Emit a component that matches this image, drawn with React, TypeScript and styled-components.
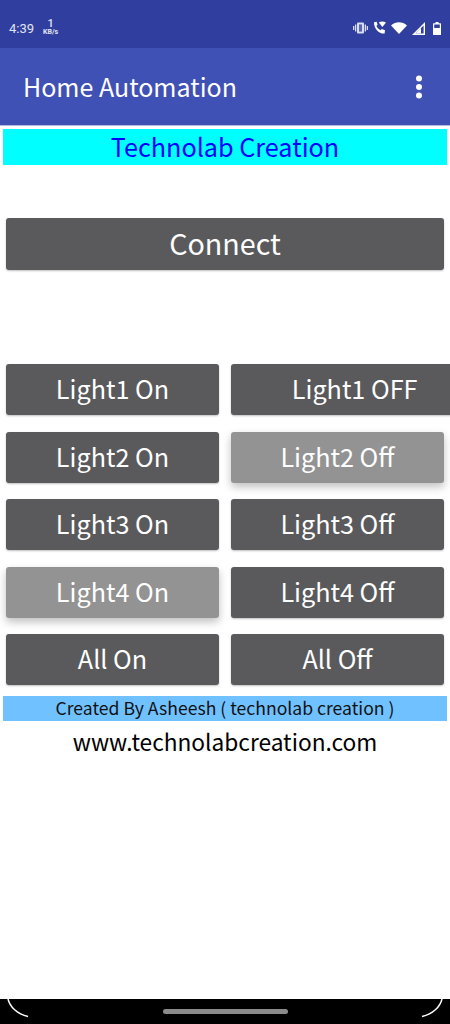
import React from 'react';
import styled, { createGlobalStyle } from 'styled-components';

const GlobalStyle = createGlobalStyle`
  html, body {
    margin: 0;
    padding: 0;
    background: #ffffff;
  }
  body {
    font-family: 'Noto Sans CJK SC', 'Noto Sans', sans-serif;
  }
`;

const Screen = styled.div`
  width: 450px;
  height: 1024px;
  display: flex;
  flex-direction: column;
  overflow: hidden;
  background: #ffffff;
`;

const StatusBar = styled.div`
  height: 48px;
  flex: none;
  box-sizing: border-box;
  padding: 8px 8px 0 9px;
  display: flex;
  align-items: center;
  background: #303f9f;
  color: #e2e4f3;
`;

const Clock = styled.span`
  font-family: 'Roboto', sans-serif;
  font-size: 13px;
  width: 34px;
`;

const NetSpeed = styled.span`
  display: flex;
  flex-direction: column;
  align-items: center;
  font-family: 'Roboto', sans-serif;
  font-weight: 700;
  font-size: 7px;
  line-height: 7px;
  margin-top: -1px;

  b {
    font-size: 11px;
    line-height: 10px;
    font-weight: 500;
  }
`;

const StatusIcons = styled.div`
  margin-left: auto;
  display: flex;
  align-items: center;
  gap: 5px;
`;

const AppBar = styled.div`
  height: 78px;
  flex: none;
  box-sizing: border-box;
  padding: 0 27px 2px 23px;
  display: flex;
  align-items: center;
  justify-content: space-between;
  background: #3f51b5;
  color: #ffffff;
  font-size: 25px;
  border-bottom: 1px solid #b4bae0;
`;

const MenuDots = styled.svg`
  margin-top: 2px;
`;

const Content = styled.div`
  flex: 1;
  display: flex;
  flex-direction: column;
  padding: 3px 3px 0;
`;

const Banner = styled.div`
  height: 36px;
  box-sizing: border-box;
  padding-bottom: 2px;
  line-height: 34px;
  text-align: center;
  background: #00ffff;
  color: #0000ff;
  font-size: 25.2px;
`;

const Button = styled.div<{ $pressed?: boolean; $large?: boolean; $wide?: boolean }>`
  height: ${p => (p.$large ? 52 : 51)}px;
  flex: none;
  box-sizing: border-box;
  padding-bottom: 3px;
  width: ${p => (p.$wide ? '248px' : 'auto')};
  display: flex;
  align-items: center;
  justify-content: center;
  white-space: nowrap;
  border-radius: 3px;
  color: #ffffff;
  font-size: ${p => (p.$large ? 28.7 : 25.2)}px;
  background: ${p => (p.$pressed ? '#939393' : '#5a5a5c')};
  box-shadow: ${p =>
    p.$pressed ? '0 4px 8px rgba(0, 0, 0, 0.25)' : '0 1px 2px rgba(0, 0, 0, 0.25)'};
`;

const ConnectWrap = styled.div`
  padding: 53px 2.67px 0;
`;

const Grid = styled.div`
  margin-top: 94px;
  padding: 0 2.67px;
  display: grid;
  grid-template-columns: 213.67px 213.67px;
  column-gap: 11.33px;
  row-gap: 16.5px;
`;

const Credit = styled.div`
  margin-top: 11px;
  height: 25px;
  line-height: 23px;
  text-align: center;
  background: #70c1ff;
  color: #111111;
  font-size: 17.6px;
`;

const Website = styled.div`
  margin-top: 6px;
  text-align: center;
  color: #000000;
  font-size: 22.7px;
  line-height: 30px;
`;

const NavBar = styled.div`
  height: 25px;
  flex: none;
  position: relative;
  background: #000000;
  display: flex;
  align-items: center;
  justify-content: center;
  padding-bottom: 1px;
  box-sizing: border-box;
`;

const HomePill = styled.div`
  width: 125px;
  height: 5px;
  margin-top: 1px;
  border-radius: 3px;
  background: #8a8a8a;
`;

const Corner = styled.svg<{ $right?: boolean }>`
  position: absolute;
  top: 0;
  ${p => (p.$right ? 'right: 7px;' : 'left: 7px;')}
`;

const rows: { label: string; pressed?: boolean; wide?: boolean }[] = [
  { label: 'Light1 On' },
  { label: 'Light1 OFF', wide: true },
  { label: 'Light2 On' },
  { label: 'Light2 Off', pressed: true },
  { label: 'Light3 On' },
  { label: 'Light3 Off' },
  { label: 'Light4 On', pressed: true },
  { label: 'Light4 Off' },
  { label: 'All On' },
  { label: 'All Off' },
];

export default function App() {
  return (
    <>
      <GlobalStyle />
      <Screen>
        <StatusBar>
          <Clock>4:39</Clock>
          <NetSpeed>
            <b>1</b>
            KB/s
          </NetSpeed>
          <StatusIcons>
            <svg width="15" height="12" viewBox="0 0 15 12" fill="#d9dcef">
              <rect x="4" y="0.5" width="7" height="11" rx="1" />
              <rect x="6" y="2.4" width="3" height="7.2" fill="#5a66b5" />
              <rect x="2" y="2.5" width="1.3" height="7" />
              <rect x="11.7" y="2.5" width="1.3" height="7" />
              <rect x="0" y="4" width="1.3" height="4" />
              <rect x="13.7" y="4" width="1.3" height="4" />
            </svg>
            <svg width="13" height="14" viewBox="0 0 13 14" fill="#ffffff">
              <path d="M1 1.2 L3.6 0.8 L4.6 3.8 L3.4 5 C4.2 6.8 5.6 8.2 7.6 9.2 L8.8 8 L12 9.2 L11.6 12.6 C6 13 0.8 7.6 1 1.2 Z" />
              <path d="M5.8 1.6 C8 0.2 10.6 0.2 13 1.6 L9.4 6 Z" />
            </svg>
            <svg width="16" height="12" viewBox="0 0 16 12" fill="#ffffff">
              <path d="M0 3.4 C4.6 -0.8 11.4 -0.8 16 3.4 L8 12 Z" />
            </svg>
            <svg width="13" height="13" viewBox="0 0 13 13" fill="#ffffff">
              <path d="M13 0 V13 H0 Z M11.6 3.4 L3.4 11.6 H11.6 Z" fillRule="evenodd" />
              <path d="M9 6 V11.6 H3.4 Z" />
            </svg>
            <svg width="8" height="13" viewBox="0 0 8 13" fill="#ffffff" style={{ marginLeft: 3, marginRight: 1 }}>
              <path d="M2.5 0 H5.5 V1.2 H7.4 C7.8 1.2 8 1.5 8 1.8 V12.4 C8 12.8 7.7 13 7.4 13 H0.6 C0.3 13 0 12.8 0 12.4 V1.8 C0 1.5 0.2 1.2 0.6 1.2 H2.5 Z M1.2 2.4 V6 H6.8 V2.4 Z" fillRule="evenodd" />
            </svg>
          </StatusIcons>
        </StatusBar>
        <AppBar>
          <span>Home Automation</span>
          <MenuDots width="8" height="24" viewBox="0 0 8 24" fill="#ffffff">
            <circle cx="4" cy="3.5" r="3" />
            <circle cx="4" cy="12" r="3" />
            <circle cx="4" cy="20.5" r="3" />
          </MenuDots>
        </AppBar>
        <Content>
          <Banner>Technolab Creation</Banner>
          <ConnectWrap>
            <Button $large>Connect</Button>
          </ConnectWrap>
          <Grid>
            {rows.map(r => (
              <Button key={r.label} $pressed={r.pressed} $wide={r.wide}>
                {r.label}
              </Button>
            ))}
          </Grid>
          <Credit>Created By Asheesh ( technolab creation )</Credit>
          <Website>www.technolabcreation.com</Website>
        </Content>
        <NavBar>
          <Corner width="22" height="19" viewBox="0 0 22 19" fill="none">
            <path d="M1 0 C3 8 10 15 21 17.5" stroke="#ffffff" strokeWidth="1.5" />
          </Corner>
          <HomePill />
          <Corner $right width="22" height="19" viewBox="0 0 22 19" fill="none">
            <path d="M21 0 C19 8 12 15 1 17.5" stroke="#ffffff" strokeWidth="1.5" />
          </Corner>
        </NavBar>
      </Screen>
    </>
  );
}
